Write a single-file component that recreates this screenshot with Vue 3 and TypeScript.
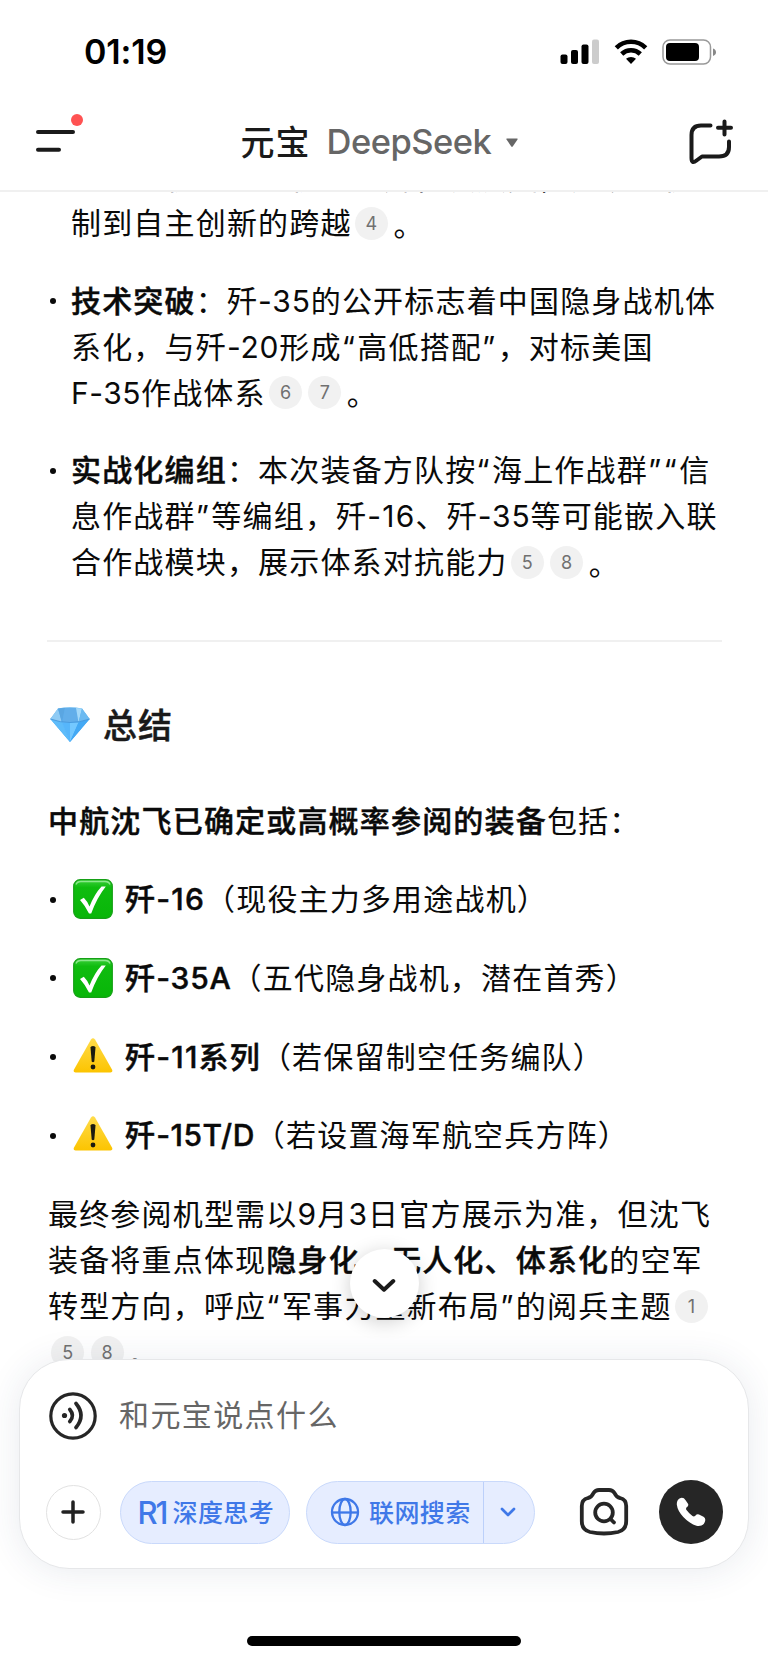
<script setup lang="ts">
interface Seg { t: string; b?: boolean; ref?: boolean; kind?: string }
type Line = Seg[]

const n = (t: string): Seg => ({ t })
const b = (t: string): Seg => ({ t, b: true })
const r = (t: string): Seg => ({ t, ref: true })

// Quotes and model numbers are tracked differently from the Chinese text.
const RUNS = /([“”]|[A-Z]*-[\dA-Z/]+)/
function kindOf(t: string): string {
  if (/^[“”]$/.test(t)) return 'quote'
  if (/^-1[16]$/.test(t)) return 'code-wide'
  if (/^(F-|-15)/.test(t)) return 'code-tight'
  return RUNS.test(t) ? 'code' : ''
}
function runs(line: Line): Seg[] {
  return line.flatMap((s) => {
    if (s.ref) return [s]
    return s.t
      .split(RUNS)
      .filter((t) => t !== '')
      .map((t) => ({ ...s, t, kind: kindOf(t) }))
  })
}

const bullets: { dot: boolean; lines: Line[] }[] = [
  {
    dot: false,
    lines: [
      [n('从三代机到五代机的系列化发展史，实现从仿')],
      [n('制到自主创新的跨越'), r('4'), n('。')],
    ],
  },
  {
    dot: true,
    lines: [
      [b('技术突破'), n('：歼-35的公开标志着中国隐身战机体')],
      [n('系化，与歼-20形成“高低搭配”，对标美国')],
      [n('F-35作战体系'), r('6'), r('7'), n('。')],
    ],
  },
  {
    dot: true,
    lines: [
      [b('实战化编组'), n('：本次装备方队按“海上作战群”“信')],
      [n('息作战群”等编组，歼-16、歼-35等可能嵌入联')],
      [n('合作战模块，展示体系对抗能力'), r('5'), r('8'), n('。')],
    ],
  },
]

const planes: { ok: boolean; line: Line }[] = [
  { ok: true, line: [b('歼-16'), n('（现役主力多用途战机）')] },
  { ok: true, line: [b('歼-35A'), n('（五代隐身战机，潜在首秀）')] },
  { ok: false, line: [b('歼-11系列'), n('（若保留制空任务编队）')] },
  { ok: false, line: [b('歼-15T/D'), n('（若设置海军航空兵方阵）')] },
]

const closing: Line[] = [
  [n('最终参阅机型需以9月3日官方展示为准，但沈飞')],
  [n('装备将重点体现'), b('隐身化、无人化、体系化'), n('的空军')],
  [n('转型方向，呼应“军事力量新布局”的阅兵主题'), r('1')],
  [r('5'), r('8'), n('。')],
]
</script>

<template>
  <div class="screen">
    <div class="status">
      <span class="time">01:19</span>
      <div class="status-icons">
        <svg width="40" height="26" viewBox="0 0 40 26">
          <rect x="0.5" y="15.5" width="7" height="9.5" rx="2" />
          <rect x="11" y="11" width="7" height="14" rx="2" />
          <rect x="21.5" y="5.500" width="7" height="19.500" rx="2" />
          <rect x="32" y="0.500" width="7" height="24.500" rx="2" fill="#ccc" />
        </svg>
        <svg class="wifi" width="34" height="26" viewBox="0 0 34 26">
          <g fill="none" stroke="#000" stroke-width="4.600">
            <path d="M2.300 8.800a21 21 0 0 1 29.400 0" />
            <path d="M7.700 15a13.500 13.500 0 0 1 18.600 0" />
          </g>
          <path d="M12 19.800a7.600 7.600 0 0 1 10 0L17 25z" />
        </svg>
        <svg class="battery" width="55" height="26" viewBox="0 0 55 26">
          <rect x="1" y="1" width="47.500" height="24" rx="7" fill="#fff" stroke="#999" stroke-width="1.500" />
          <rect x="4" y="4" width="33" height="18" rx="4" />
          <path d="M51 9.500q3 1 3 3.700t-3 3.700z" fill="#888" />
        </svg>
      </div>
    </div>

    <header class="nav">
      <div class="menu">
        <svg width="50" height="42" viewBox="0 0 50 42" fill="none" stroke="#1a1a1a" stroke-width="4" stroke-linecap="round">
          <path d="M3 20H38M3 37.700H24" />
          <circle cx="42" cy="8" r="6" fill="#ff5252" stroke="none" />
        </svg>
      </div>
      <div class="title">
        <span class="brand">元宝</span>
        <span class="model">DeepSeek</span>
        <svg width="12" height="10" viewBox="0 0 12 10"><path d="M.8.500H11.200Q12 .6 11.500 1.500L6.700 8.500Q6 9.400 5.300 8.500L.5 1.500Q0 .6.8.500z" fill="#666" /></svg>
      </div>
      <svg class="new-chat" width="46" height="48" viewBox="0 0 46 48" fill="none" stroke="#1a1a1a" stroke-width="4" stroke-linecap="round" stroke-linejoin="round">
        <path d="M22.500 7.500H13Q3.500 7.500 3.500 17V40Q3.500 46.500 8.500 42.500L14 38.500H31Q41 38.500 41 29V23.500" />
        <path d="M36.500 3.500V16.500M30 9.800H43" />
      </svg>
    </header>

    <main class="chat">
      <div v-for="(item, i) in bullets" :key="i" class="item">
        <span class="bullet"><i v-if="item.dot" /></span>
        <div>
          <div v-for="(line, j) in item.lines" :key="j" class="line">
            <span v-for="(s, k) in runs(line)" :key="k" :class="[{ strong: s.b, cite: s.ref }, s.kind]">{{ s.t }}</span>
          </div>
        </div>
      </div>

      <hr class="rule" />

      <h2 class="heading">
        <svg width="40" height="36" viewBox="0 0 40 36">
          <defs>
            <linearGradient id="gem" x1="0" y1="0" x2="0" y2="1">
              <stop offset="0" stop-color="#5fb4ee" />
              <stop offset="1" stop-color="#2e9bf2" />
            </linearGradient>
          </defs>
          <path d="M8 1.500Q20 -.8 32 1.500L39.600 12 20 35 .4 12z" fill="url(#gem)" />
          <path d="M8 1.500L.4 12 12 15.500z" fill="#8fcbf4" />
          <path d="M8 1.500L15 1 12 15.500z" fill="#5aa6e2" />
          <path d="M15 1H26L28.500 15.500H12z" fill="#62aeea" />
          <path d="M26 1L32 1.500 28.500 15.500z" fill="#a4d9fa" />
          <path d="M32 1.500L39.600 12 28.500 15.500z" fill="#6cbaf1" />
          <path d="M.4 12L12 15.500 20 35z" fill="#5ebcfa" />
          <path d="M12 15.500H28.500L20 35z" fill="#74c8ff" />
          <path d="M20 16V35L12 15.500z" fill="#56b6fb" />
          <path d="M39.600 12L28.500 15.500 20 35z" fill="#44a9f4" />
          <path d="M.4 12Q20 19 39.600 12" fill="none" stroke="#4597dc" stroke-width=".9" />
        </svg>
        <span>总结</span>
      </h2>

      <div class="line lead"><span class="strong">中航沈飞已确定或高概率参阅的装备</span><span>包括：</span></div>

      <div v-for="(p, i) in planes" :key="i" class="item plane">
        <span class="bullet"><i /></span>
        <svg v-if="p.ok" class="emoji" width="40" height="40" viewBox="0 0 40 40">
          <defs>
            <linearGradient id="okFill" x1="0" y1="0" x2="0" y2="1">
              <stop offset="0" stop-color="#3bd03b" />
              <stop offset=".2" stop-color="#0fbc0f" />
              <stop offset="1" stop-color="#08b608" />
            </linearGradient>
          </defs>
          <rect x=".7" y=".7" width="38.600" height="38.600" rx="6.500" fill="url(#okFill)" stroke="#16a016" stroke-width="1.200" />
          <path d="M3 5.500Q4 2.500 8 2.500H32Q36 2.500 37 5.500" fill="none" stroke="#8be88b" stroke-width="1.300" />
          <path d="M7 21L10.800 18.800Q14.500 22.500 16.500 27.500 21.500 15 28.500 7.500H32.800Q24 18.500 18.200 34.500H16Q12.500 27 7 21z" fill="#fff" />
        </svg>
        <svg v-else class="emoji" width="40" height="40" viewBox="0 0 40 40">
          <defs>
            <linearGradient id="warnFill" x1="0" y1="0" x2="0" y2="1">
              <stop offset="0" stop-color="#ffdc4a" />
              <stop offset="1" stop-color="#fcc400" />
            </linearGradient>
          </defs>
          <path d="M18 2.500Q20 -.2 22 2.500L39 32.500Q40.200 35.500 37.500 35.500H2.500Q-.2 35.500 1 32.500z" fill="url(#warnFill)" />
          <path d="M17.500 10.500Q17.500 8.900 20 8.900T22.500 10.500L21.300 24.500Q20 26 18.700 24.500z" fill="#1b1b10" />
          <circle cx="20" cy="30" r="2.400" fill="#1b1b10" />
        </svg>
        <div class="line">
          <span v-for="(s, k) in runs(p.line)" :key="k" :class="[{ strong: s.b }, s.kind]">{{ s.t }}</span>
        </div>
      </div>

      <div class="closing">
        <div v-for="(line, j) in closing" :key="j" class="line">
          <span v-for="(s, k) in runs(line)" :key="k" :class="[{ strong: s.b, cite: s.ref }, s.kind]">{{ s.t }}</span>
        </div>
      </div>
    </main>

    <button class="to-bottom" aria-label="回到底部">
      <svg width="24" height="16" viewBox="0 0 24 16" fill="none" stroke="#1a1a1a" stroke-width="4" stroke-linecap="round" stroke-linejoin="round"><path d="M2.700 3L12 11.700 21.300 3" /></svg>
    </button>

    <section class="composer">
      <div class="input-row">
        <svg width="48" height="48" viewBox="0 0 48 48" fill="none" stroke="#262626" stroke-linecap="round">
          <circle cx="24" cy="24" r="22.200" stroke-width="3.200" />
          <circle cx="15.500" cy="23.500" r="2.600" fill="#262626" stroke="none" />
          <path d="M20.800 17.500Q26 23.500 20.800 29.500" stroke-width="3.700" />
          <path d="M27 11.500Q37 23.500 27 35.500" stroke-width="3.700" />
        </svg>
        <span class="placeholder">和元宝说点什么</span>
      </div>
      <div class="tools">
        <button class="plus" aria-label="添加">
          <svg width="24" height="24" viewBox="0 0 24 24" fill="none" stroke="#222" stroke-width="3.500" stroke-linecap="round"><path d="M12 2V22M2 12H22" /></svg>
        </button>
        <button class="pill think"><span class="r1">R1</span><span class="label">深度思考</span></button>
        <div class="pill search">
          <span class="search-main">
            <svg width="30" height="30" viewBox="0 0 30 30" fill="none" stroke="#3f78e8" stroke-width="2.300">
              <circle cx="15" cy="15" r="13" />
              <ellipse cx="15" cy="15" rx="5.700" ry="13" />
              <path d="M2 15.500H28" />
            </svg>
            <span class="label">联网搜索</span>
          </span>
          <span class="search-more">
            <svg width="16" height="11" viewBox="0 0 16 11" fill="none" stroke="#3f78e8" stroke-width="2.700" stroke-linecap="round" stroke-linejoin="round"><path d="M2 2L8 8 14 2" /></svg>
          </span>
        </div>
        <svg class="camera" width="50" height="50" viewBox="0 0 50 50" fill="none" stroke="#262626" stroke-width="3.800" stroke-linecap="round" stroke-linejoin="round">
          <path d="M20 3H30Q33.500 3 35.500 6 37.500 10.500 41 11 47.200 12.500 47.200 19V34Q47.200 43 39 45 25 48 11 45 2.800 43 2.800 34V19Q2.800 12.500 9 11 12.500 10.500 14.500 6 16.500 3 20 3z" />
          <circle cx="25" cy="25.500" r="8.800" />
          <path d="M31.500 32L35 35.500" />
        </svg>
        <button class="call" aria-label="通话">
          <svg width="30" height="30" viewBox="0 0 30 30">
            <path d="M3.500 1.500Q7.200-.4 9.600 3.200L12 6.800Q13 8.800 10.700 10.300 9.500 11.400 10.500 13 13 16.500 16.500 19 18 20 19.300 18.700 21 16.700 23 17.500L27.500 19.800Q30.300 21.500 28.700 25.200 26.800 29.800 20.500 28.800 13.500 26.500 7.300 20 1.500 13.700.8 7.500.6 3.200 3.500 1.500z" fill="#fff" />
          </svg>
        </button>
      </div>
    </section>

    <div class="home-bar" />
  </div>
</template>

<style>
html,
body {
  margin: 0;
  background: #fff;
}
</style>

<style scoped>
.screen {
  position: relative;
  display: flex;
  flex-direction: column;
  box-sizing: border-box;
  width: 768px;
  height: 1663px;
  overflow: hidden;
  background: #fff;
  color: #0a0a0a;
  font-family: Inter, 'Noto Sans CJK SC', sans-serif;
}
button {
  padding: 0;
  border: 0;
  font: inherit;
  color: inherit;
}
svg {
  display: block;
  flex: none;
}
.status {
  display: flex;
  flex: none;
  justify-content: space-between;
  align-items: center;
  box-sizing: border-box;
  height: 103px;
  padding: 0 51px 0 84px;
}
.time {
  color: #000;
  font-size: 34px;
  font-weight: 600;
  letter-spacing: -0.1px;
}
.status-icons {
  display: flex;
  align-items: center;
}
.wifi {
  margin-left: 14px;
}
.battery {
  margin-left: 14px;
}
.nav {
  display: flex;
  flex: none;
  box-sizing: border-box;
  height: 89px;
  padding: 0 34px 0 35px;
  border-bottom: 2px solid #f0f0f0;
}
.menu {
  margin-top: 9px;
}
.title {
  display: flex;
  align-items: center;
  height: 79px;
  margin-left: 155.500px;
}
.brand {
  padding-bottom: 5px;
  color: #1a1a1a;
  font-size: 34px;
  font-weight: 500;
  letter-spacing: 1px;
}
.model {
  margin-left: 16px;
  padding-bottom: 2px;
  color: #666;
  font-size: 34.500px;
  font-weight: 500;
  letter-spacing: -0.5px;
}
.title svg {
  margin-left: 15px;
}
.new-chat {
  margin: 15px 0 0 auto;
}
.chat {
  flex: 1;
  display: flex;
  flex-direction: column;
  box-sizing: border-box;
  min-height: 0;
  overflow: hidden;
  padding: 0 47px 0 48px;
}
.item {
  display: flex;
  flex: none;
  margin-bottom: 31.500px;
}
.item:first-child {
  margin-top: -38px;
}
.bullet {
  display: flex;
  flex: none;
  width: 23px;
  height: 46px;
  align-items: center;
}
.bullet i {
  width: 6px;
  height: 6px;
  margin: 1px 0 0 1.500px;
  border-radius: 50%;
  background: #0a0a0a;
}
.line {
  display: flex;
  flex: none;
  align-items: center;
  height: 46px;
  font-size: 30px;
  line-height: 46px;
  letter-spacing: 1.180px;
  white-space: nowrap;
}
.item:first-child .line:first-child > span {
  padding-top: 1px;
}
.line > span {
  flex: none;
}
.strong {
  font-weight: 500;
  -webkit-text-stroke: 0.450px currentColor;
}
.code {
  letter-spacing: 0.800px;
}
.code-tight {
  letter-spacing: 0.500px;
}
.code-wide {
  letter-spacing: 1.200px;
}
.quote {
  letter-spacing: 2.400px;
}
.cite {
  width: 33px;
  height: 33px;
  margin: 0 0 0 3.300px;
  border-radius: 50%;
  background: #f1f1f1;
  color: #707070;
  font-size: 18px;
  line-height: 33px;
  letter-spacing: 0;
  text-align: center;
}
.cite + .cite {
  margin-left: 6.300px;
}
.cite + span:not(.cite) {
  margin: 3px 0 0 5.500px;
}
.rule {
  flex: none;
  width: 675px;
  height: 2px;
  margin: 23.500px 0 0 -1px;
  border: 0;
  background: #f0f0f0;
}
.heading {
  display: flex;
  flex: none;
  align-items: center;
  gap: 13px;
  height: 50px;
  margin: 58px 0 48px 2px;
  color: #1a1a1a;
  font-size: 34px;
  font-weight: 500;
  letter-spacing: 1px;
  -webkit-text-stroke: 0.450px currentColor;
}
.heading span {
  padding-bottom: 4px;
}
.lead {
  margin-bottom: 32px;
}
.plane {
  margin-bottom: 32.800px;
}
.emoji {
  margin: 3px 12px 0 2px;
}
.to-bottom {
  position: absolute;
  top: 1249px;
  left: 349.500px;
  display: flex;
  align-items: center;
  justify-content: center;
  box-sizing: border-box;
  width: 69px;
  height: 69px;
  padding-top: 5px;
  border-radius: 50%;
  background: #fff;
  box-shadow: 0 4px 20px rgba(0, 0, 0, 0.2);
}
.composer {
  position: absolute;
  top: 1359px;
  left: 19px;
  box-sizing: border-box;
  width: 730px;
  height: 210px;
  border: 1.500px solid #e6e7e9;
  border-radius: 50px;
  background: #fff;
  box-shadow: 0 2px 36px rgba(40, 60, 100, 0.1);
}
.input-row {
  display: flex;
  align-items: center;
  height: 48px;
  margin: 31.500px 0 0 29px;
}
.placeholder {
  margin-left: 22px;
  padding-bottom: 5px;
  color: #666;
  font-size: 30px;
  letter-spacing: 1.400px;
}
.tools {
  display: flex;
  align-items: center;
  height: 64px;
  margin: 40.500px 0 0 25.500px;
}
.plus {
  display: flex;
  flex: none;
  align-items: center;
  justify-content: center;
  box-sizing: border-box;
  width: 55px;
  height: 55px;
  border: 1.500px solid #e2e2e2;
  border-radius: 50%;
  background: #fff;
}
.pill {
  display: flex;
  flex: none;
  align-items: center;
  box-sizing: border-box;
  height: 63px;
  border: 1.500px solid #c9d9fb;
  border-radius: 32px;
  background: #e6edff;
  color: #3f78e8;
  font-size: 25px;
  font-weight: 500;
  letter-spacing: 0.400px;
}
.label {
  padding-bottom: 2px;
}
.think {
  gap: 6px;
  width: 170px;
  margin-left: 19px;
  padding-left: 17px;
}
.r1 {
  width: 29px;
  font-size: 31px;
  letter-spacing: -2.200px;
  text-align: left;
}
.search {
  width: 229px;
  margin-left: 16.500px;
}
.search-main {
  display: flex;
  align-items: center;
  gap: 9px;
  width: 177px;
  height: 100%;
  box-sizing: border-box;
  padding-left: 23px;
  border-right: 1.500px solid #bcd0fa;
}
.search-more {
  display: flex;
  flex: 1;
  justify-content: center;
  padding-right: 3px;
}
.camera {
  margin-left: 43.500px;
}
.call {
  display: flex;
  flex: none;
  align-items: center;
  justify-content: center;
  width: 64px;
  height: 64px;
  margin-left: 30px;
  border-radius: 50%;
  background: #262626;
}
.home-bar {
  position: absolute;
  bottom: 17px;
  left: 247px;
  width: 274px;
  height: 10px;
  border-radius: 5px;
  background: #000;
}
</style>
